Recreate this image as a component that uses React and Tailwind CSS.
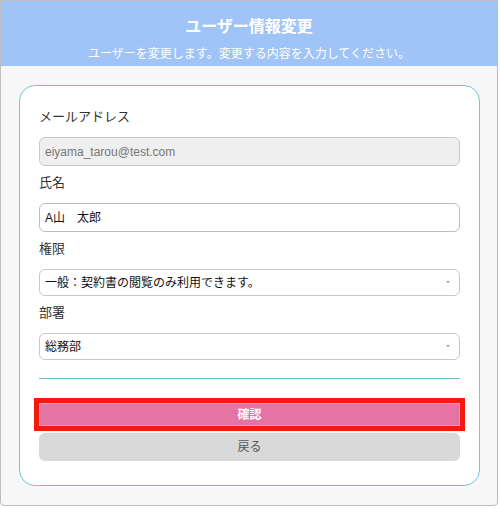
import React from 'react';

const font = { fontFamily: '"Liberation Sans", "Noto Sans CJK JP", sans-serif' };

const Label = ({ children }) => (
  <div className="h-[20px] leading-[20px] text-[13px] text-[#333] mb-[10px]">{children}</div>
);

const SelectBox = ({ value }) => (
  <div className="relative h-[27px] border border-[#c8c8c8] rounded-md bg-white flex items-center px-[5px] text-[12px] text-[#111]">
    {value}
    <span className="absolute right-[9px] top-[11px] w-0 h-0 border-l-[2px] border-r-[2px] border-t-[2px] border-l-transparent border-r-transparent border-t-[#999]" />
  </div>
);

export default function App() {
  return (
    <div style={font} className="w-[498px] h-[506px] border border-[#bdbdbd] rounded-b-[4px] bg-[#f7f7f7] overflow-hidden">
      {/* header band */}
      <div className="h-[65px] bg-[#a0c4f8] flex flex-col items-center">
        <h1 className="mt-[15px] text-[16px] leading-[22px] font-bold text-white">ユーザー情報変更</h1>
        <p className="mt-[8px] text-[12px] leading-[16px] text-white">ユーザーを変更します。変更する内容を入力してください。</p>
      </div>

      {/* form card */}
      <div className="ml-[18px] mt-[19px] w-[461px] h-[401px] border border-[#72c8c8] rounded-2xl bg-white px-[19px] pt-[21px]">
        <Label>メールアドレス</Label>
        <div className="h-[29px] border border-[#c8c8c8] rounded-md bg-[#efefef] flex items-center px-[5px] text-[12px] text-[#777]">
          eiyama_tarou@test.com
        </div>

        <div className="mt-[7px]">
          <Label>氏名</Label>
        </div>
        <div className="h-[29px] border border-[#bdbdbd] rounded-md bg-white flex items-center px-[5px] text-[12px] text-[#111]">
          A山　太郎
        </div>

        <div className="mt-[7px]">
          <Label>権限</Label>
        </div>
        <SelectBox value="一般：契約書の閲覧のみ利用できます。" />

        <div className="mt-[7px]">
          <Label>部署</Label>
        </div>
        <SelectBox value="総務部" />

        <div className="mt-[18px] h-px bg-[#6fc0c0]" />

        <button className="mt-[24px] w-full h-[23px] bg-[#e374a4] border border-[#ea9cc0] outline-[5px] outline-solid outline-[#f21a0a] text-[12px] text-white font-bold flex items-center justify-center">
          確認
        </button>
        <button className="mt-[7px] w-full h-[28px] bg-[#d9d9d9] rounded-md text-[12px] text-[#555] flex items-center justify-center">
          戻る
        </button>
      </div>
    </div>
  );
}
